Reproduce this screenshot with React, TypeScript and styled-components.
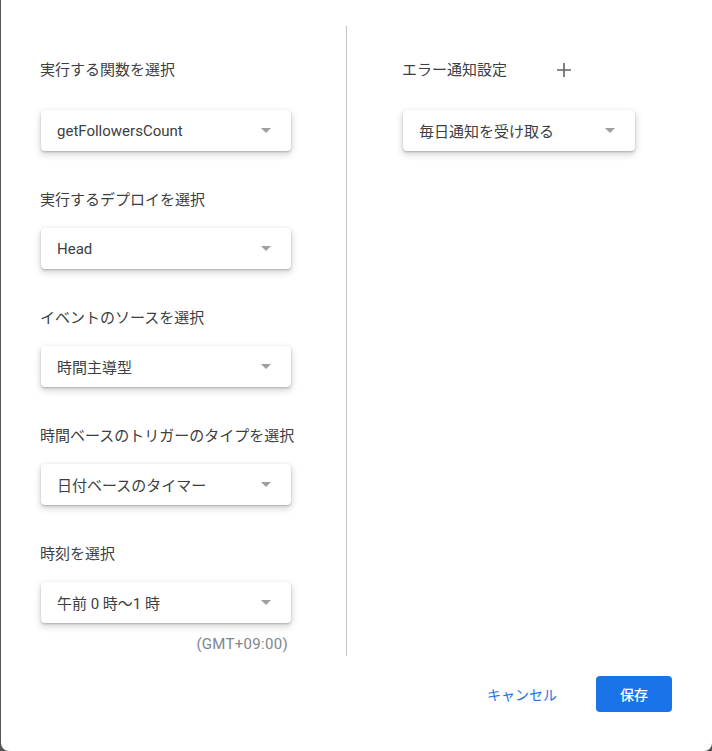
import React from 'react';
import styled, { createGlobalStyle } from 'styled-components';

const GlobalStyle = createGlobalStyle`
  html, body {
    margin: 0;
    padding: 0;
    background: #555555;
  }
  body {
    font-family: Roboto, "Noto Sans CJK JP", sans-serif;
  }
`;

const Backdrop = styled.div`
  width: 712px;
  height: 751px;
  padding-left: 1px;
  box-sizing: border-box;
  background: #555555;
`;

const Dialog = styled.div`
  height: 100%;
  background: #ffffff;
  border-radius: 0 0 8px 8px;
  display: flex;
  flex-direction: column;
  padding-top: 26px;
  box-sizing: border-box;
`;

const Columns = styled.div`
  display: flex;
  height: 630px;
`;

const LeftColumn = styled.div`
  width: 346px;
  padding: 34px 0 0 39px;
  box-sizing: border-box;
  border-right: 1px solid #c4c4c4;
`;

const RightColumn = styled.div`
  flex: 1;
  padding: 34px 0 0 55px;
`;

const Group = styled.div`
  display: flex;
  flex-direction: column;
  align-items: flex-start;
  & + & {
    margin-top: 39px;
  }
`;

const LabelRow = styled.div<{ $first?: boolean }>`
  display: flex;
  align-items: center;
  height: 20px;
  margin-bottom: ${({ $first }) => ($first ? '30px' : '18px')};
`;

const Label = styled.span`
  font-size: 15px;
  line-height: 20px;
  color: #3c4043;
`;

const AddButton = styled.button`
  display: flex;
  align-items: center;
  justify-content: center;
  width: 24px;
  height: 24px;
  margin-left: 45px;
  padding: 0;
  border: none;
  background: none;
  color: #5f6368;
  cursor: pointer;
`;

const SelectBox = styled.div<{ $width: number }>`
  width: ${({ $width }) => $width}px;
  height: 41px;
  margin-left: 1px;
  display: flex;
  align-items: center;
  justify-content: space-between;
  padding: 0 20px 0 16px;
  box-sizing: border-box;
  background: #ffffff;
  border-radius: 4px;
  box-shadow: 0 1px 2px rgba(60, 64, 67, 0.3), 0 3px 6px 1px rgba(60, 64, 67, 0.2);
`;

const SelectValue = styled.span`
  font-size: 15px;
  color: #3c4043;
  white-space: nowrap;
`;

const Arrow = styled.span`
  width: 0;
  height: 0;
  border-left: 5.5px solid transparent;
  border-right: 5.5px solid transparent;
  border-top: 5px solid #9e9e9e;
`;

const TimezoneNote = styled.div`
  width: 248px;
  margin-top: 11px;
  text-align: right;
  font-size: 15px;
  letter-spacing: 0.3px;
  line-height: 20px;
  color: #80868b;
`;

const Footer = styled.div`
  display: flex;
  justify-content: flex-end;
  align-items: center;
  padding: 20px 40px 0 0;
`;

const TextButton = styled.button`
  height: 36px;
  padding: 0 24px;
  margin-right: 15px;
  border: none;
  background: none;
  font-family: inherit;
  font-size: 14px;
  color: #1a73e8;
  cursor: pointer;
`;

const PrimaryButton = styled.button`
  width: 76px;
  height: 36px;
  border: none;
  border-radius: 4px;
  background: #1a73e8;
  color: #ffffff;
  font-family: inherit;
  font-size: 14px;
  font-weight: 500;
  cursor: pointer;
`;

const Select: React.FC<{ value: string; width?: number }> = ({ value, width = 250 }) => (
  <SelectBox $width={width}>
    <SelectValue>{value}</SelectValue>
    <Arrow />
  </SelectBox>
);

const fields = [
  { label: '実行する関数を選択', value: 'getFollowersCount' },
  { label: '実行するデプロイを選択', value: 'Head' },
  { label: 'イベントのソースを選択', value: '時間主導型' },
  { label: '時間ベースのトリガーのタイプを選択', value: '日付ベースのタイマー' },
  { label: '時刻を選択', value: '午前 0 時～1 時' },
];

const App: React.FC = () => (
  <>
    <GlobalStyle />
    <Backdrop>
      <Dialog>
        <Columns>
          <LeftColumn>
            {fields.map((f, i) => (
              <Group key={f.label}>
                <LabelRow $first={i === 0}>
                  <Label>{f.label}</Label>
                </LabelRow>
                <Select value={f.value} />
                {i === fields.length - 1 && <TimezoneNote>(GMT+09:00)</TimezoneNote>}
              </Group>
            ))}
          </LeftColumn>
          <RightColumn>
            <Group>
              <LabelRow $first>
                <Label>エラー通知設定</Label>
                <AddButton aria-label="追加">
                  <svg width="24" height="24" viewBox="0 0 24 24">
                    <path d="M19 12.8h-6.2V19h-1.6v-6.2H5v-1.6h6.2V5h1.6v6.2H19z" fill="currentColor" />
                  </svg>
                </AddButton>
              </LabelRow>
              <Select value="毎日通知を受け取る" width={232} />
            </Group>
          </RightColumn>
        </Columns>
        <Footer>
          <TextButton>キャンセル</TextButton>
          <PrimaryButton>保存</PrimaryButton>
        </Footer>
      </Dialog>
    </Backdrop>
  </>
);

export default App;
